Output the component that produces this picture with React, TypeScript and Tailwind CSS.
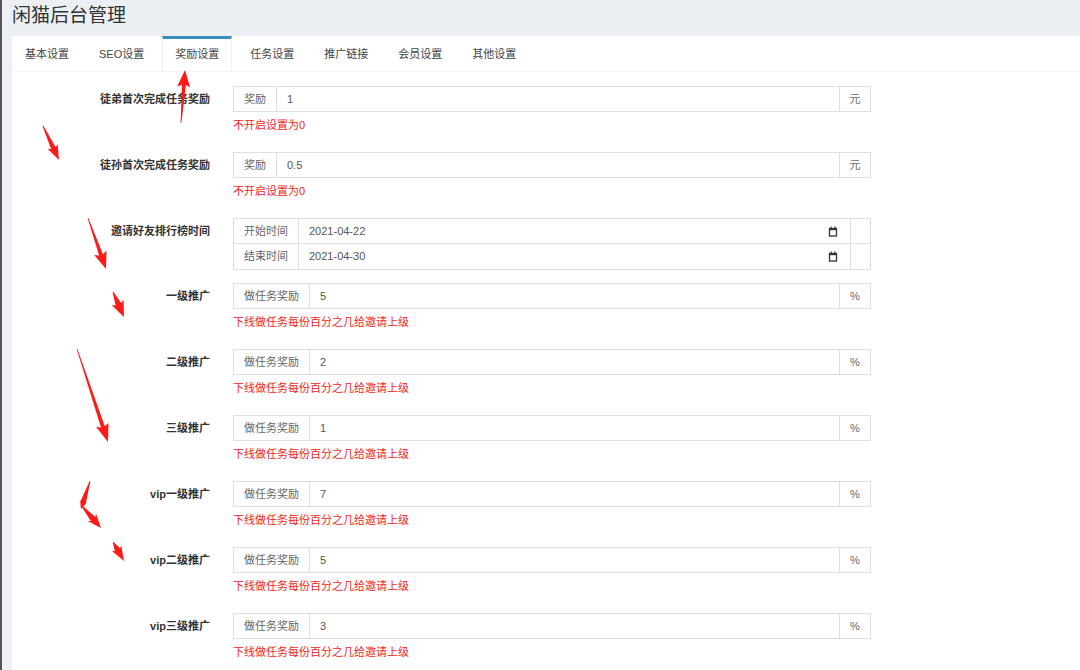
import React from 'react';

const tabs = ['基本设置', 'SEO设置', '奖励设置', '任务设置', '推广链接', '会员设置', '其他设置'];

const promo = [
  { label: '一级推广', value: '5' },
  { label: '二级推广', value: '2' },
  { label: '三级推广', value: '1' },
  { label: 'vip一级推广', value: '7' },
  { label: 'vip二级推广', value: '5' },
  { label: 'vip三级推广', value: '3' },
];

type Pt = [number, number];

// tapered marker-style arrow, tail -> tip
function arrowPoints(tail: Pt, tip: Pt, h: number, w: number, s: number) {
  const dx = tip[0] - tail[0];
  const dy = tip[1] - tail[1];
  const len = Math.hypot(dx, dy);
  const ux = dx / len;
  const uy = dy / len;
  const nx = -uy;
  const ny = ux;
  const bx = tip[0] - ux * h;
  const by = tip[1] - uy * h;
  const pts: Pt[] = [
    [tail[0] + nx * 0.4, tail[1] + ny * 0.4],
    [bx + nx * s, by + ny * s],
    [bx + nx * w - ux * 2, by + ny * w - uy * 2],
    tip,
    [bx - nx * w - ux * 2, by - ny * w - uy * 2],
    [bx - nx * s, by - ny * s],
    [tail[0] - nx * 0.4, tail[1] - ny * 0.4],
  ];
  return pts.map((p) => `${p[0].toFixed(1)},${p[1].toFixed(1)}`).join(' ');
}

const arrows: { tail: Pt; tip: Pt; h: number; w: number; s: number }[] = [
  { tail: [181, 123], tip: [185, 70], h: 15, w: 6.5, s: 2 },
  { tail: [43, 126], tip: [59, 160], h: 13, w: 5.5, s: 2.5 },
  { tail: [88, 218], tip: [106, 269], h: 15, w: 6.5, s: 2 },
  { tail: [113, 292], tip: [124, 317], h: 14, w: 6.5, s: 3 },
  { tail: [77, 349], tip: [108, 442], h: 16, w: 6.5, s: 2 },
  { tail: [90, 481], tip: [81, 509], h: 6, w: 3.5, s: 3 },
  { tail: [81, 505], tip: [101, 528], h: 12, w: 5.5, s: 3 },
  { tail: [113, 542], tip: [124, 561], h: 13, w: 5.5, s: 3 },
];

function Calendar() {
  return (
    <svg width="10" height="11" viewBox="0 0 10 11" className="shrink-0">
      <rect x="1.5" y="2.5" width="7" height="7.5" fill="none" stroke="#333" strokeWidth="1.3" />
      <rect x="1" y="2" width="8" height="2.2" fill="#333" />
      <rect x="2.5" y="0.5" width="1.2" height="2" fill="#333" />
      <rect x="6.3" y="0.5" width="1.2" height="2" fill="#333" />
    </svg>
  );
}

function Label({ text }: { text: string }) {
  return (
    <div className="w-[198px] shrink-0 h-[26px] leading-[26px] text-right font-bold text-[11px] text-[#333]">
      {text}
    </div>
  );
}

function InputRow({ addon, value, suffix }: { addon: string; value: string; suffix: string }) {
  return (
    <div className="flex h-[26px] w-[638px] border border-[#dcdfe5] text-[11px]">
      <div className="px-[10px] leading-[24px] text-[#666] border-r border-[#dcdfe5]">{addon}</div>
      <div className="flex-1 px-[10px] leading-[24px] text-[#555]">{value}</div>
      <div className="w-[31px] text-center leading-[24px] text-[#666] border-l border-[#dcdfe5]">{suffix}</div>
    </div>
  );
}

function DateRow({ addon, value, first }: { addon: string; value: string; first?: boolean }) {
  return (
    <div className={`flex h-[26px] w-[638px] border border-[#dcdfe5] text-[11px] ${first ? '' : 'border-t-0'}`}>
      <div className="px-[10px] leading-[24px] text-[#666] border-r border-[#dcdfe5]">{addon}</div>
      <div className="flex-1 flex items-center pl-[10px] pr-[12px] text-[#555]">
        <span className="flex-1">{value}</span>
        <Calendar />
      </div>
      <div className="w-[20px] border-l border-[#dcdfe5]" />
    </div>
  );
}

function Help({ text }: { text: string }) {
  return <div className="mt-[4px] leading-[18px] text-[11px] text-[#f52525]">{text}</div>;
}

export default function App() {
  return (
    <div className="relative h-[670px] w-full overflow-hidden bg-[#ecf0f5] border-l-2 border-[#555] flex flex-col font-[family-name:'Liberation_Sans','Noto_Sans_CJK_SC',sans-serif]">
      <div className="h-[36px] shrink-0 pl-[10px] text-[19px] leading-[31px] text-[#333]">闲猫后台管理</div>
      <div className="ml-[10px] flex-1 bg-white">
        <div className="flex h-[36px] border-b border-[#f4f4f4] pl-px">
          {tabs.map((t, i) => (
            <div
              key={t}
              className={`px-3 mr-[6px] border-t-[3px] leading-[31px] text-[11px] text-[#444] ${
                i === 2 ? 'border-[#3c8dbc] border-x border-x-[#f0f0f0]' : 'border-t-transparent'
              }`}
            >
              {t}
            </div>
          ))}
        </div>

        <div className="pt-[14px]">
          <div className="flex mb-[18px]">
            <Label text="徒弟首次完成任务奖励" />
            <div className="ml-[23px]">
              <InputRow addon="奖励" value="1" suffix="元" />
              <Help text="不开启设置为0" />
            </div>
          </div>
          <div className="flex mb-[18px]">
            <Label text="徒孙首次完成任务奖励" />
            <div className="ml-[23px]">
              <InputRow addon="奖励" value="0.5" suffix="元" />
              <Help text="不开启设置为0" />
            </div>
          </div>
          <div className="flex mb-[13px]">
            <Label text="邀请好友排行榜时间" />
            <div className="ml-[23px]">
              <DateRow addon="开始时间" value="2021-04-22" first />
              <DateRow addon="结束时间" value="2021-04-30" />
            </div>
          </div>
          {promo.map((p) => (
            <div key={p.label} className="flex mb-[18px]">
              <Label text={p.label} />
              <div className="ml-[23px]">
                <InputRow addon="做任务奖励" value={p.value} suffix="%" />
                <Help text="下线做任务每份百分之几给邀请上级" />
              </div>
            </div>
          ))}
        </div>
      </div>

      <svg className="absolute left-[-2px] top-0 pointer-events-none" width="1080" height="670" viewBox="0 0 1080 670">
        {arrows.map((a, i) => (
          <polygon key={i} points={arrowPoints(a.tail, a.tip, a.h, a.w, a.s)} fill="#ff1a1a" />
        ))}
      </svg>
    </div>
  );
}
